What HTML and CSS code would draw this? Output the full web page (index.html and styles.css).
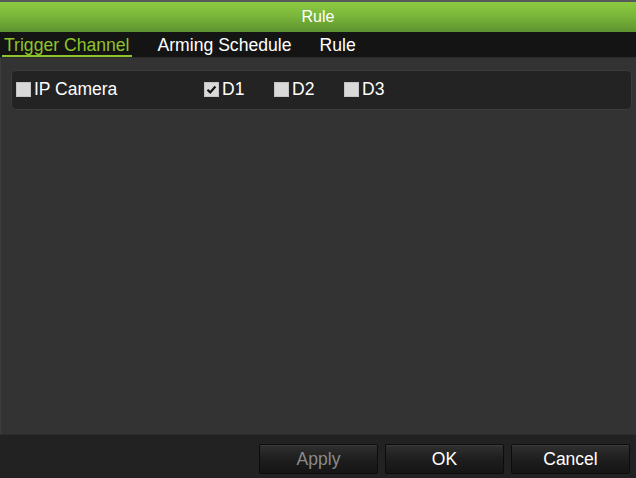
FILE: index.html
```html
<!DOCTYPE html>
<html>
<head>
<meta charset="utf-8">
<link rel="stylesheet" href="styles.css">
</head>
<body>
<div class="dialog">
  <div class="titlebar">Rule</div>
  <div class="tabs">
    <span class="tab active">Trigger Channel</span>
    <span class="tab">Arming Schedule</span>
    <span class="tab">Rule</span>
  </div>
  <div class="content">
    <div class="panel">
      <label class="item item-wide"><span class="cb"></span><span>IP Camera</span></label>
      <label class="item"><span class="cb checked"><svg viewBox="0 0 15 15" width="15" height="15"><path d="M3.5 7.8 L6.2 10.4 L11.4 4.6" fill="none" stroke="#111" stroke-width="2.2"/></svg></span><span>D1</span></label>
      <label class="item"><span class="cb"></span><span>D2</span></label>
      <label class="item"><span class="cb"></span><span>D3</span></label>
    </div>
  </div>
  <div class="footer">
    <button class="btn disabled">Apply</button>
    <button class="btn">OK</button>
    <button class="btn">Cancel</button>
  </div>
</div>
</body>
</html>
```
FILE: styles.css
```css
html, body {
  margin: 0;
  padding: 0;
  background: #333333;
}
body {
  width: 636px;
  height: 478px;
  overflow: hidden;
  font-family: "Liberation Sans", Arial, sans-serif;
}
.dialog {
  display: flex;
  flex-direction: column;
  height: 478px;
  border-top: 2px solid #55595b;
  box-sizing: border-box;
}
.titlebar {
  height: 30px;
  line-height: 30px;
  text-align: center;
  color: #ffffff;
  font-size: 16px;
  background: linear-gradient(#8cc940 0%, #7ab73a 45%, #5e9330 100%);
}
.tabs {
  height: 25px;
  background: #141414;
  display: flex;
  gap: 24px;
  padding-left: 2px;
  border-bottom: 1px solid #2a2a2a;
}
.tab {
  color: #ffffff;
  font-size: 17.6px;
  padding: 3px 2px 0 2px;
  height: 20px;
  line-height: 20px;
}
.tab.active {
  color: #8fc32a;
  border-bottom: 2px solid #8fc32a;
}
.content {
  flex: 1;
  background: #333333;
  padding: 12px 4px 0 10px;
  border-left: 1px solid #3d3d3d;
}
.panel {
  height: 40px;
  box-sizing: border-box;
  border: 1px solid #3b3b3b;
  border-radius: 5px;
  background: #232323;
  display: flex;
  align-items: center;
  padding: 0 0 2px 4px;
}
.item {
  display: flex;
  align-items: center;
  gap: 3px;
  width: 70px;
  color: #ffffff;
  font-size: 17.5px;
}
.item-wide {
  width: 188px;
}
.cb {
  width: 15px;
  height: 15px;
  background: #d9d9d9;
  box-shadow: inset 0 0 0 1px #c4c4c4;
  display: inline-block;
}
.cb svg {
  display: block;
}
.footer {
  height: 44px;
  background: #222222;
  border-top: 1px solid #2c2c2c;
  display: flex;
  justify-content: flex-end;
  align-items: flex-start;
  gap: 7px;
  padding: 9px 6px 0 0;
  box-sizing: border-box;
}
.btn {
  width: 119px;
  height: 30px;
  border: 1px solid #0c0c0c;
  border-radius: 2px;
  background: linear-gradient(#303030 0%, #1e1e1e 50%, #151515 100%);
  box-shadow: inset 0 1px 0 #3c3c3c;
  color: #ffffff;
  font-family: "Liberation Sans", Arial, sans-serif;
  font-size: 17.5px;
  padding: 0;
}
.btn.disabled {
  color: #8a8a8a;
}
```
